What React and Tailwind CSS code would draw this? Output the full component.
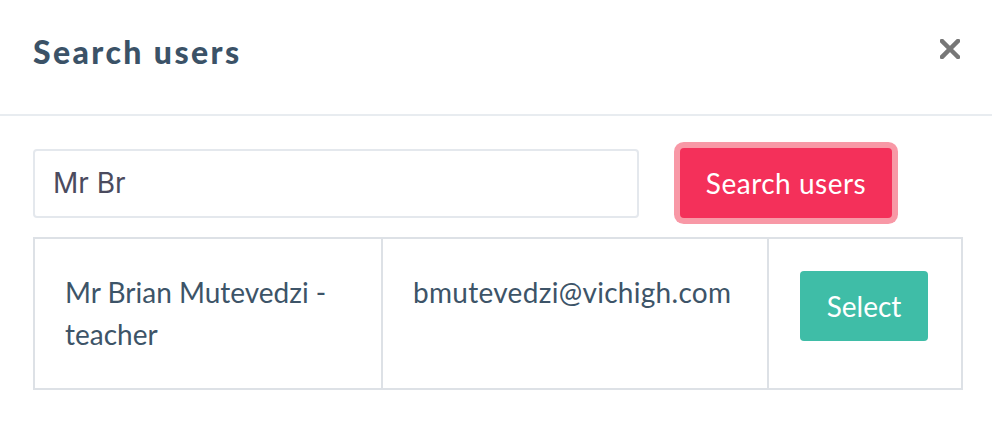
import { useState } from "react";

const users = [
  { name: "Mr Brian Mutevedzi - teacher", email: "bmutevedzi@vichigh.com" },
];

function CloseIcon() {
  return (
    <svg width="20" height="20" viewBox="0 0 20 20" className="block">
      <path d="M2 2L18 18M18 2L2 18" stroke="#777777" strokeWidth="4.5" strokeLinecap="square" />
    </svg>
  );
}

export default function App() {
  const [query, setQuery] = useState("Mr Br");

  return (
    <div className="w-[992px] h-[448px] bg-white font-['Lato',sans-serif] text-[#3d5468]">
      <div className="flex items-start justify-between h-[116px] pl-[33px] pr-[32px] pt-[36px] border-b-2 border-[#e8ecf0]">
        <h2 className="text-[32px] font-black tracking-[2.4px] text-[#3b5267] leading-[32px]">Search users</h2>
        <button className="mt-[3px]">
          <CloseIcon />
        </button>
      </div>

      <div className="px-[33px] pt-[32px]">
        <div className="flex items-center gap-[41px]">
          <input
            type="text"
            value={query}
            onChange={(e) => setQuery(e.target.value)}
            className="w-[606px] h-[69px] px-[18px] border-2 border-[#e4e8ed] rounded-[4px] text-[28px] text-[#4b4b5e] font-['Inter',sans-serif] outline-none"
          />
          <button className="h-[70px] w-[212px] bg-[#f4305a] text-white text-[28px] tracking-[0.5px] rounded-[4px] ring-[6px] ring-[#f898a6]">
            Search users
          </button>
        </div>

        <table className="mt-[19px] w-[930px] border-collapse text-[28px] leading-[42px]">
          <tbody>
            {users.map((u) => (
              <tr key={u.email}>
                <td className="w-[348px] align-top border-2 border-[#dde1e6] pl-[30px] pr-[32px] pt-[32px] pb-[33px]">
                  {u.name}
                </td>
                <td className="w-[386px] align-top border-2 border-[#dde1e6] pl-[30px] pr-[32px] pt-[32px] tracking-[0.3px]">
                  {u.email}
                </td>
                <td className="align-top border-2 border-[#dde1e6] pl-[31px] pr-[32px] pt-[32px]">
                  <button className="w-[128px] h-[70px] bg-[#3fbda7] text-white rounded-[4px]">Select</button>
                </td>
              </tr>
            ))}
          </tbody>
        </table>
      </div>
    </div>
  );
}
